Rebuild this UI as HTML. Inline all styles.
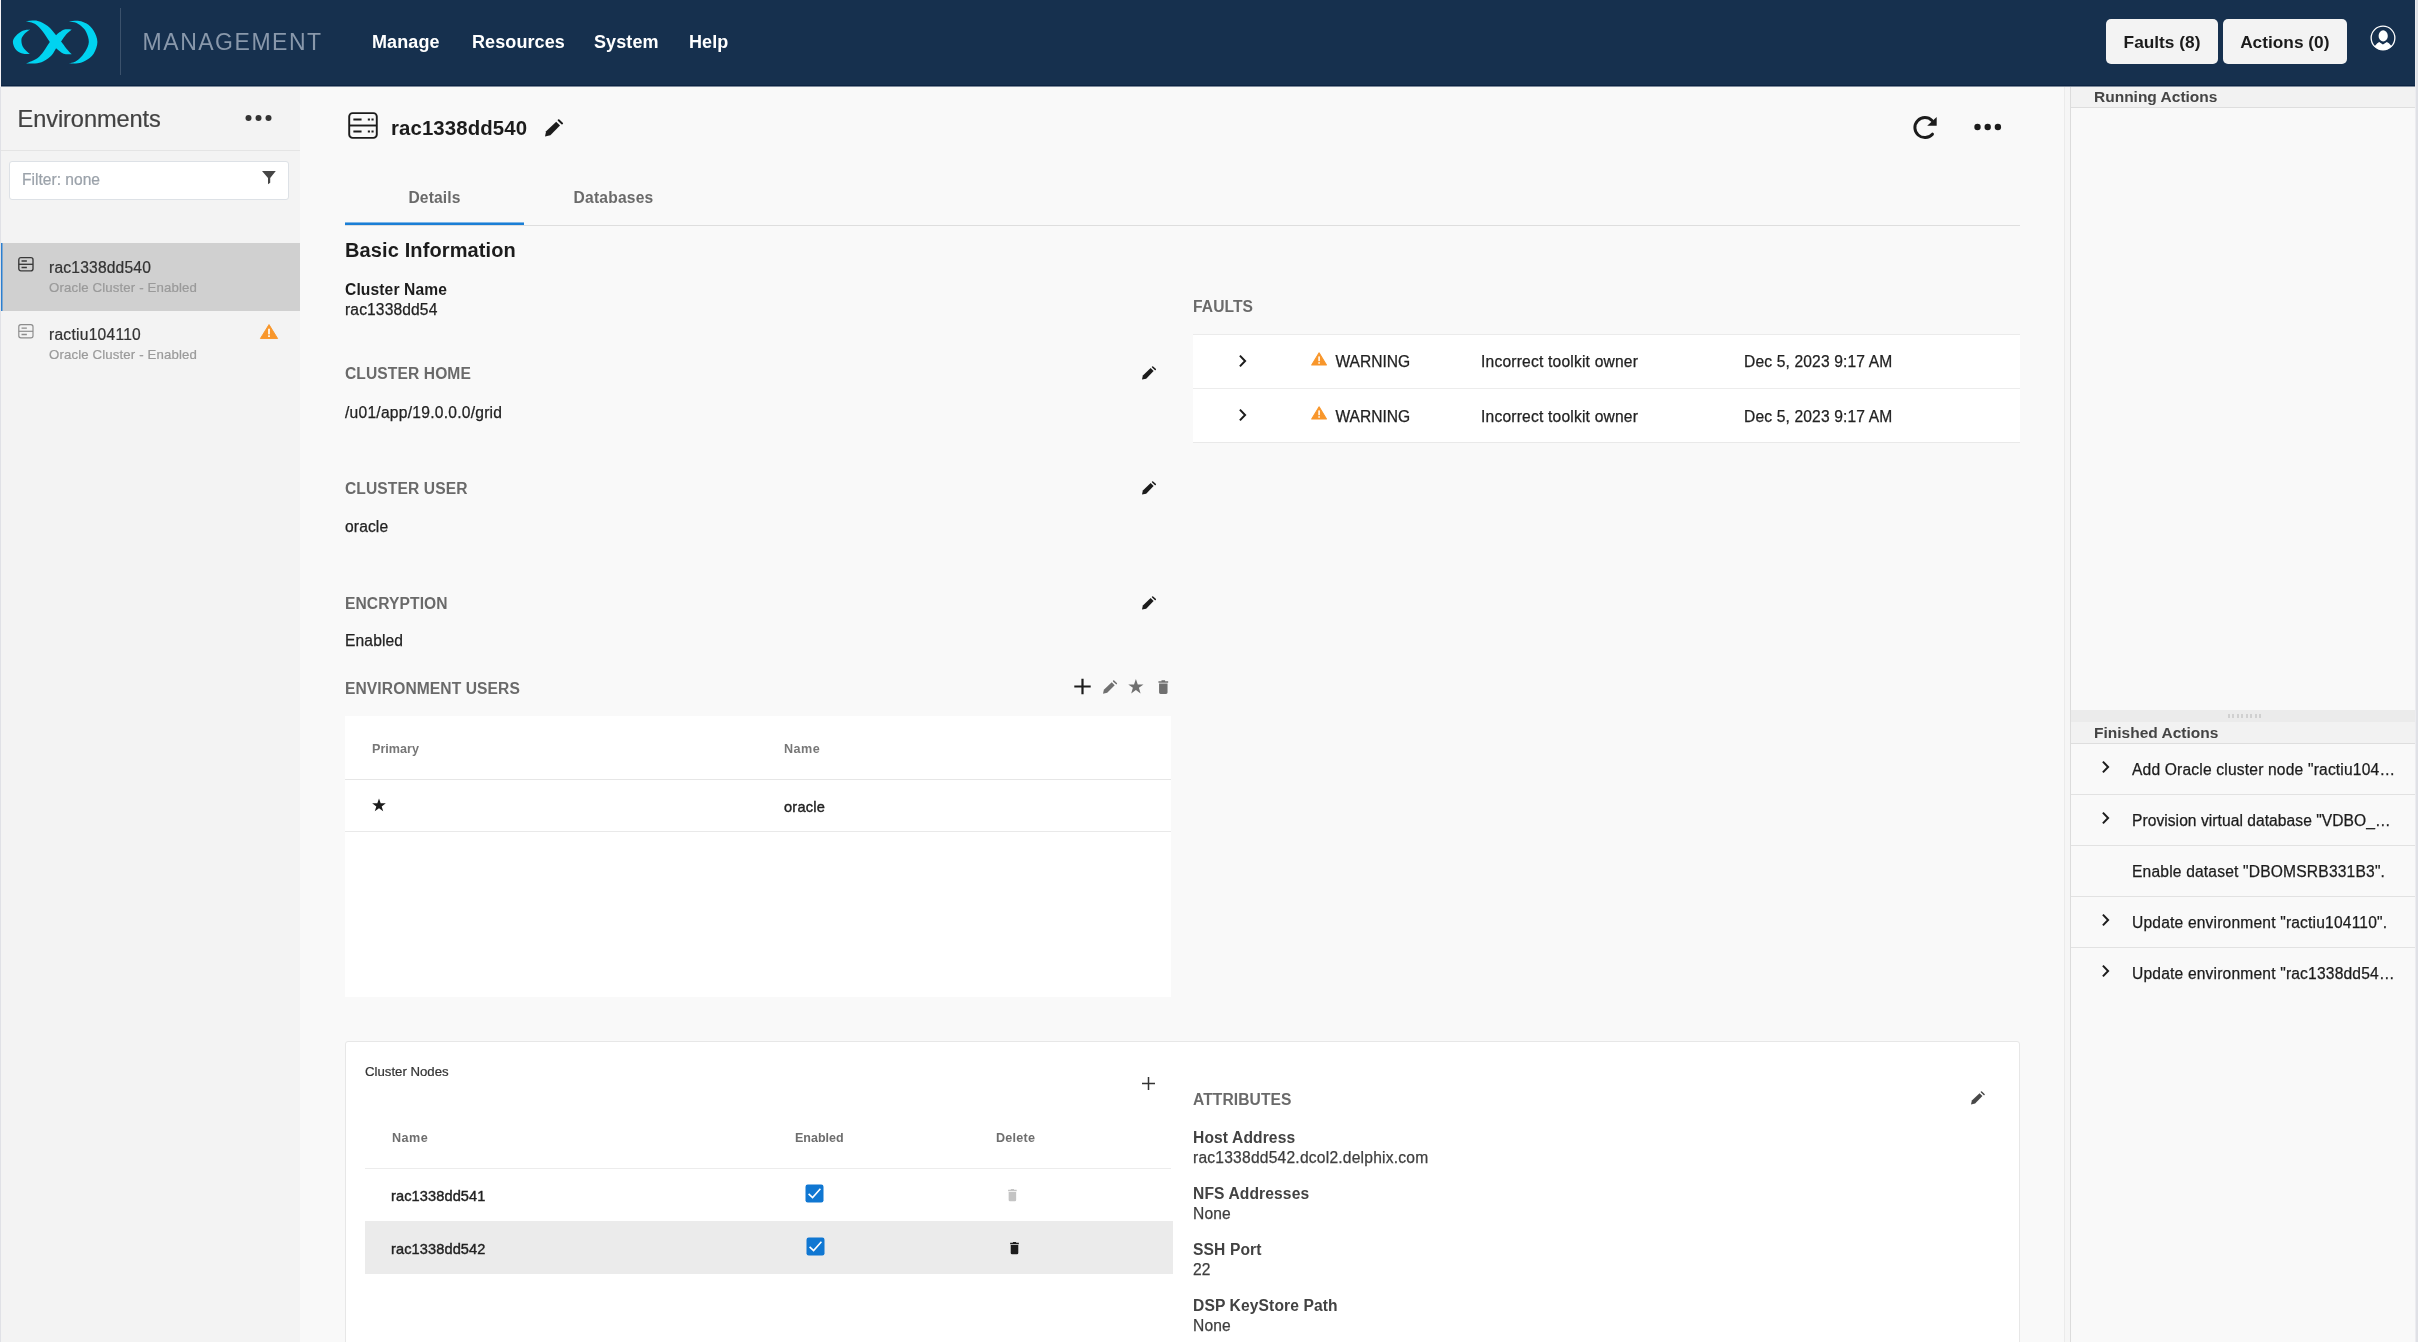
<!DOCTYPE html>
<html lang="en">
<head>
<meta charset="utf-8">
<title>Management - Environments</title>
<style>
*{box-sizing:border-box;margin:0;padding:0}
html,body{width:2418px;height:1342px;overflow:hidden;background:#e0e1e6}
body{font-family:"Liberation Sans",sans-serif;color:#1f1f1f;position:relative}
.abs,.t{position:absolute}
.t{white-space:nowrap;line-height:20px;-webkit-text-stroke:0.22px currentColor}
.b,.lbl,.hd,.nav,#mgmt{font-weight:bold;-webkit-text-stroke:0 transparent}
#mgmt{font-weight:normal}
#app{position:absolute;left:1px;top:0;width:2414px;height:1342px;background:#fafafa;overflow:hidden;will-change:transform}
/* header */
#hdr{position:absolute;left:0;top:0;width:2414px;height:87px;background:#16304e;border-bottom:1px solid #7d8a9b;box-shadow:inset 0 -1px 0 #0b2342;z-index:5}
#hdr .nav{color:#fff;font-weight:bold;font-size:18px;top:32px;letter-spacing:0.1px}
#hdr .btn{position:absolute;top:19px;height:45px;background:#f3f3f3;border-radius:5px;color:#1b1b1b;font-weight:bold;font-size:17.3px;line-height:47px;text-align:center}
/* sidebar */
#side{position:absolute;left:0;top:86px;width:299px;height:1256px;background:#f3f3f3}
/* main */
#main{position:absolute;left:299px;top:86px;width:1765px;height:1256px;background:#f9f9f9}
.lbl{font-weight:bold;font-size:15.6px;color:#6a6a6a;letter-spacing:0.1px}
.val{font-size:15.6px;color:#222;letter-spacing:0.13px;-webkit-text-stroke:0.25px currentColor}
.hd{font-weight:bold;font-size:15.6px;color:#424242;letter-spacing:0.12px}
/* right */
#split{position:absolute;left:2063px;top:86px;width:7px;height:1256px;background:#f6f6f6;border-left:1px solid #ebebeb;border-right:1px solid #dcdcdc}
#right{position:absolute;left:2070px;top:86px;width:344px;height:1256px;background:#f9f9f9}
.ph{position:absolute;left:0;width:344px;height:22px;background:#f2f2f2;border-bottom:1px solid #dedede}
.ph span{position:absolute;left:23px;top:0;line-height:22px;font-weight:bold;font-size:15.5px;color:#444}
.ar{position:absolute;left:0;width:344px;height:51px;border-bottom:1px solid #e2e2e2}
.ar .t{left:61px;top:16px;font-size:15.6px;color:#1c1c1c;letter-spacing:0.18px;-webkit-text-stroke:0.25px currentColor}
svg{position:absolute;overflow:visible}
</style>
</head>
<body>
<div class="abs" style="left:0;top:0;width:1px;height:87px;background:#f4f2f5"></div>
<div class="abs" style="left:2415px;top:0;width:1px;height:1342px;background:#ececf0"></div>
<div id="app">
<svg width="0" height="0" style="position:absolute;left:0;top:0"><defs>
<g id="pen"><path d="M0 17.4L1.1 12.3L11.2 2.7L15 6.5L5.4 16.3Z" fill="currentColor"/><path d="M13.7 1.2L17.1 4.4" stroke="currentColor" stroke-width="2" stroke-linecap="round" fill="none"/></g>
<path id="star" d="M7.5 0L9.3 5.2H14.8L10.4 8.5L12 13.8L7.5 10.6L3 13.8L4.6 8.5L0.2 5.2H5.7Z"/>
<path id="trash" d="M3.3 0H6.7V0.9H9.6V2.3H0.4V0.9H3.3ZM1 3.2H9V11.6Q9 13 7.6 13H2.4Q1 13 1 11.6Z"/>
<path id="chev" d="M1.9 1.6L7.1 7L1.9 12.4" fill="none" stroke="#1c1c1c" stroke-width="2"/>
<g id="warn"><path d="M9.5 1L18.2 15.2H0.8Z" fill="#f8962b" stroke="#f8962b" stroke-width="1.2" stroke-linejoin="round"/><rect x="8.6" y="5.2" width="1.8" height="5.6" fill="#fff"/><rect x="8.6" y="12" width="1.8" height="1.8" fill="#fff"/></g>
<g id="chk"><rect x="0.5" y="0.5" width="18" height="18" rx="2.2" fill="#1077d2"/><path d="M3.6 9.8L7.6 13.6L15.4 4.8" fill="none" stroke="#fff" stroke-width="1.6"/></g>
</defs></svg>

<!-- HEADER -->
<div id="hdr">
  <svg id="logo" style="left:5px;top:14px" width="100" height="56" viewBox="0 0 2396 1342"><g fill="#00d3f1">
    <path d="M570 370C542 375 455 375 400 400C345 425 279 477 240 520C201 563 168 608 165 660C162 712 186 783 220 830C254 877 312 918 370 940C428 962 532 957 565 960L565 955C549 941 498 899 470 870C442 841 417 815 400 780C383 745 372 697 370 660C368 623 368 595 385 560C402 525 439 481 470 450C501 419 553 388 570 375Z"/>
    <path d="M490 175C535 173 675 146 760 165C845 184 927 232 1000 290C1073 348 1147 448 1200 510C1253 572 1278 607 1320 660C1362 713 1408 780 1450 830C1492 880 1550 938 1570 960L1570 965C1538 962 1442 974 1380 950C1318 926 1255 867 1200 820C1145 773 1103 737 1050 670C997 603 938 492 880 420C822 348 765 280 700 240C635 200 525 190 490 180Z"/>
    <path d="M1570 370C1542 370 1448 358 1400 370C1352 382 1313 417 1280 440C1247 463 1238 472 1200 510C1162 548 1100 605 1050 670C1000 735 950 835 900 900C850 965 818 1013 750 1060C682 1107 533 1160 490 1180L490 1185C525 1185 632 1194 700 1185C768 1176 833 1164 900 1130C967 1096 1050 1032 1100 980C1150 928 1163 873 1200 820C1237 767 1278 717 1320 660C1362 603 1408 528 1450 480C1492 432 1550 392 1570 375Z"/>
    <path d="M1520 175C1558 173 1682 156 1750 165C1818 174 1872 191 1930 230C1988 269 2057 327 2100 400C2143 473 2190 578 2190 670C2190 762 2148 875 2100 950C2052 1025 1963 1082 1900 1120C1837 1158 1783 1169 1720 1180C1657 1191 1553 1184 1520 1185L1520 1182C1540 1177 1602 1167 1640 1150C1678 1133 1707 1122 1750 1080C1793 1038 1861 968 1900 900C1939 832 1982 748 1985 670C1988 592 1951 493 1920 430C1889 367 1840 327 1800 290C1760 253 1727 229 1680 210C1633 191 1547 183 1520 178Z"/>
  </g></svg>
  <svg id="user" style="left:2369.1px;top:24.8px" width="26" height="26" viewBox="0 0 26 26"><defs><clipPath id="uc"><circle cx="13" cy="13" r="12"/></clipPath></defs><circle cx="13" cy="13" r="11.85" fill="none" stroke="#fff" stroke-width="1.3"/><g clip-path="url(#uc)" fill="#fff"><ellipse cx="13.2" cy="10.9" rx="4.6" ry="5.6"/><path d="M2 23L5 20.7Q7.5 17.6 9.2 17.1Q11 18.5 12.9 19.6Q15 18.5 16.8 17.1Q19 17.8 21 20.4L24 23V26H2Z"/></g></svg>
  <div class="abs" style="left:119px;top:8px;width:1px;height:67px;background:#3b516b"></div>
  <div class="t" id="mgmt" style="left:141.6px;top:28px;font-size:23px;line-height:28px;letter-spacing:1.52px;color:#8998ab">MANAGEMENT</div>
  <div class="t nav" style="left:371px">Manage</div>
  <div class="t nav" style="left:471px">Resources</div>
  <div class="t nav" style="left:593px">System</div>
  <div class="t nav" style="left:688px">Help</div>
  <div class="btn" style="left:2105px;width:112px"><span class="bt">Faults (8)</span></div>
  <div class="btn" style="left:2222px;width:123.6px"><span class="bt">Actions (0)</span></div>
</div>

<!-- SIDEBAR -->
<div id="side">
  <div class="t" style="left:16.5px;top:17px;font-size:23.6px;line-height:32px;color:#424242;letter-spacing:-0.08px">Environments</div>
  <svg style="left:243.6px;top:27.6px" width="28" height="8" viewBox="0 0 28 8"><circle cx="3.5" cy="4" r="3" fill="#333"/><circle cx="13.5" cy="4" r="3" fill="#333"/><circle cx="23.5" cy="4" r="3" fill="#333"/></svg>
  <div class="abs" style="left:0;top:64px;width:299px;height:1px;background:#e4e4e4"></div>
  <div class="abs" style="left:8px;top:75px;width:280px;height:38.6px;background:#fff;border:1px solid #dde1e6;border-radius:3px"></div>
  <div class="t" style="left:21px;top:84px;font-size:15.6px;color:#9ba2aa">Filter: none</div>
  <svg style="left:260.9px;top:84.9px" width="13.8" height="13.2" viewBox="0 0 13.8 13.2"><path d="M0 0H13.8L8.2 7V11.7L6 13.2V7Z" fill="#464646"/></svg>
  <!-- item 1 selected -->
  <div class="abs" style="left:0;top:157px;width:299px;height:68px;background:linear-gradient(90deg,#2a7fd0 0 1px,#7fa9d2 1px 2px,#d0d0d0 2px)"></div>
  <svg style="left:16.8px;top:170.5px" width="15.8" height="14.6" viewBox="0 0 16 15" fill="none" stroke="#3a3a3a" stroke-width="1.4"><rect x="0.7" y="0.7" width="14.6" height="13.6" rx="2.2"/><path d="M0.7 7.5H15.3"/><path d="M3.5 4.2H9M3.5 10.8H9" stroke-width="1.6"/></svg>
  <div class="t" style="left:48px;top:172px;font-size:15.6px;letter-spacing:0.2px;color:#333">rac1338dd540</div>
  <div class="t" style="left:48px;top:192px;font-size:13.2px;letter-spacing:0.15px;color:#9a9a9a">Oracle Cluster - Enabled</div>
  <!-- item 2 -->
  <svg style="left:16.8px;top:237.8px" width="15.8" height="14.6" viewBox="0 0 16 15" fill="none" stroke="#8c8c8c" stroke-width="1.2"><rect x="0.7" y="0.7" width="14.6" height="13.6" rx="2.2"/><path d="M0.7 7.5H15.3"/><path d="M3.5 4.2H9M3.5 10.8H9" stroke-width="1.4"/></svg>
  <div class="t" style="left:48px;top:239px;font-size:15.6px;letter-spacing:0.25px;color:#333">ractiu104110</div>
  <div class="t" style="left:48px;top:259px;font-size:13.2px;letter-spacing:0.15px;color:#9a9a9a">Oracle Cluster - Enabled</div>
  <svg style="left:258.6px;top:237.7px" width="18" height="15.1" viewBox="0 0 19 16" preserveAspectRatio="none"><path d="M9.5 0.6L18.6 15.4H0.4Z" fill="#f8962b" stroke="#f8962b" stroke-width="1" stroke-linejoin="round"/><rect x="8.6" y="5" width="1.8" height="6" fill="#fff"/><rect x="8.6" y="12" width="1.8" height="1.8" fill="#fff"/></svg>
</div>

<!-- MAIN -->
<div id="main">
  <!-- title row (coords relative to main: x-300, y-86) -->
  <svg style="left:48px;top:26px" width="30" height="27" viewBox="0 0 31 28" fill="none" stroke="#1c1c1c" stroke-width="2"><rect x="1.2" y="1.2" width="28.6" height="25.6" rx="3.5"/><path d="M1.2 14H29.8"/><path d="M5.5 7.8H14M5.5 20.2H14" stroke-width="2.2"/><path d="M20.5 7.8H22.7M24.3 7.8H26.5M20.5 20.2H22.7M24.3 20.2H26.5" stroke-width="2.2"/></svg>
  <div class="t b" style="left:91px;top:29px;font-size:20.4px;line-height:26px;letter-spacing:0.1px;color:#1c1c1c">rac1338dd540</div>
  <svg style="left:245.4px;top:33.4px;color:#1c1c1c" width="18.2" height="17.5" viewBox="0 0 18.2 17.5"><use href="#pen"/></svg>
  <svg style="left:1612px;top:29.4px" width="26" height="26" viewBox="0 0 26 26"><path d="M19.97 5.53A10 10 0 1 0 20.45 19.16" fill="none" stroke="#1c1c1c" stroke-width="3" stroke-linecap="round"/><path d="M24.7 2.1V10.7H15.2Z" fill="#1c1c1c"/></svg>
  <svg style="left:1674px;top:37px" width="28" height="8" viewBox="0 0 28 8"><circle cx="3.5" cy="4" r="3.2" fill="#1c1c1c"/><circle cx="13.7" cy="4" r="3.2" fill="#1c1c1c"/><circle cx="23.9" cy="4" r="3.2" fill="#1c1c1c"/></svg>
  <!-- tabs -->
  <div class="t b" style="left:45px;top:102px;width:179px;text-align:center;font-size:15.6px;letter-spacing:0.15px;color:#6a6a6a">Details</div>
  <div class="t b" style="left:224px;top:102px;width:179px;text-align:center;font-size:15.6px;letter-spacing:0.2px;color:#6a6a6a">Databases</div>
  <div class="abs" style="left:45px;top:139px;width:1675px;height:1px;background:#dedede"></div>
  <div class="abs" style="left:45px;top:136px;width:179px;height:3px;background:linear-gradient(#7fb6e6 0 1px,#1b7fd6 1px)"></div>
  <!-- basic info -->
  <div class="t b" style="left:45px;top:151px;font-size:20px;line-height:26px;letter-spacing:0.12px;color:#1c1c1c">Basic Information</div>
  <div class="t b" style="left:45px;top:194px;font-size:15.6px;letter-spacing:0.12px;color:#1c1c1c">Cluster Name</div>
  <div class="t val" style="left:45px;top:214px">rac1338dd54</div>
  <div class="t lbl" style="left:45px;top:278px">CLUSTER HOME</div>
  <div class="t val" style="left:45px;top:317px;letter-spacing:0.25px">/u01/app/19.0.0.0/grid</div>
  <div class="t lbl" style="left:45px;top:393px">CLUSTER USER</div>
  <div class="t val" style="left:45px;top:431px">oracle</div>
  <div class="t lbl" style="left:45px;top:508px">ENCRYPTION</div>
  <div class="t val" style="left:45px;top:545px">Enabled</div>
  <div class="t lbl" style="left:45px;top:593px">ENVIRONMENT USERS</div>
  <!-- edit pencils -->
  <svg style="left:842.2px;top:280.3px;color:#1c1c1c" width="14.1" height="13.6" viewBox="0 0 18.2 17.5"><use href="#pen"/></svg>
  <svg style="left:842.2px;top:395.1px;color:#1c1c1c" width="14.1" height="13.6" viewBox="0 0 18.2 17.5"><use href="#pen"/></svg>
  <svg style="left:842.2px;top:510px;color:#1c1c1c" width="14.1" height="13.6" viewBox="0 0 18.2 17.5"><use href="#pen"/></svg>
  <!-- env users toolbar -->
  <svg style="left:773.7px;top:591.8px" width="17" height="17" viewBox="0 0 17 17"><path d="M8.5 0.7V16.3M0.3 8.5H16.7" stroke="#1c1c1c" stroke-width="2.2" fill="none"/></svg>
  <svg style="left:803.1px;top:593.7px;color:#707070" width="14.2" height="13.9" viewBox="0 0 18.2 17.5"><use href="#pen"/></svg>
  <svg style="left:827.8px;top:593.2px" width="15.8" height="14.6" viewBox="0 0 15 14"><use href="#star" fill="#707070"/></svg>
  <svg style="left:858.3px;top:593.6px" width="10.6" height="14.2" viewBox="0 0 10 13"><use href="#trash" fill="#707070"/></svg>
  <!-- env users table -->
  <div class="abs" style="left:45px;top:630px;width:826px;height:281px;background:#fff"></div>
  <div class="abs" style="left:45px;top:693px;width:826px;height:1px;background:#e6e6e6"></div>
  <div class="abs" style="left:45px;top:745px;width:826px;height:1px;background:#e9e9e9"></div>
  <div class="t b" style="left:72px;top:653px;font-size:12.6px;color:#777">Primary</div>
  <div class="t b" style="left:484px;top:653px;font-size:12.6px;letter-spacing:0.45px;color:#777">Name</div>
  <svg style="left:72px;top:712px" width="14" height="14" viewBox="0 0 15 14"><use href="#star" fill="#1c1c1c"/></svg>
  <div class="t" style="left:484px;top:711px;font-size:14.6px;color:#222;letter-spacing:0.2px;-webkit-text-stroke:0.4px currentColor">oracle</div>

  <!-- FAULTS -->
  <div class="t lbl" style="left:893px;top:211px">FAULTS</div>
  <div class="abs" style="left:893px;top:248px;width:827px;height:109px;background:#fff;border-top:1px solid #ebebeb;border-bottom:1px solid #e9e9e9"></div>
  <div class="abs" style="left:893px;top:302px;width:827px;height:1px;background:#ececec"></div>
  <svg style="left:938px;top:268px" width="10" height="14" viewBox="0 0 10 14"><use href="#chev"/></svg>
  <svg style="left:938px;top:322px" width="10" height="14" viewBox="0 0 10 14"><use href="#chev"/></svg>
  <svg style="left:1010.7px;top:265.7px" width="16.2" height="13.6" viewBox="0 0 19 16" preserveAspectRatio="none"><use href="#warn"/></svg>
  <svg style="left:1010.7px;top:320.3px" width="16.2" height="13.6" viewBox="0 0 19 16" preserveAspectRatio="none"><use href="#warn"/></svg>
  <div class="t val" style="left:1035.5px;top:266px;font-size:15.6px;letter-spacing:-0.03px">WARNING</div>
  <div class="t val" style="left:1181px;top:266px;font-size:15.6px;letter-spacing:0.2px">Incorrect toolkit owner</div>
  <div class="t val" style="left:1444px;top:266px;font-size:15.6px;letter-spacing:0.15px">Dec 5, 2023 9:17 AM</div>
  <div class="t val" style="left:1035.5px;top:321px;font-size:15.6px;letter-spacing:-0.03px">WARNING</div>
  <div class="t val" style="left:1181px;top:321px;font-size:15.6px;letter-spacing:0.2px">Incorrect toolkit owner</div>
  <div class="t val" style="left:1444px;top:321px;font-size:15.6px;letter-spacing:0.15px">Dec 5, 2023 9:17 AM</div>

  <!-- CLUSTER NODES CARD -->
  <div class="abs" style="left:45px;top:955px;width:1675px;height:320px;background:#fff;border:1px solid #e7e7e7;border-radius:3px"></div>
  <div class="t" style="left:65px;top:976px;font-size:13.2px;color:#333">Cluster Nodes</div>
  <svg style="left:842.3px;top:990.5px" width="13" height="13" viewBox="0 0 13 13"><path d="M6.5 0V13M0 6.5H13" stroke="#333" stroke-width="1.5" fill="none"/></svg>
  <div class="t b" style="left:92px;top:1042px;font-size:12.6px;letter-spacing:0.45px;color:#6e6e6e">Name</div>
  <div class="t b" style="left:495px;top:1042px;font-size:12.5px;color:#6e6e6e">Enabled</div>
  <div class="t b" style="left:696px;top:1042px;font-size:12.6px;letter-spacing:0.25px;color:#6e6e6e">Delete</div>
  <div class="abs" style="left:65px;top:1082px;width:806px;height:1px;background:#ececec"></div>
  <div class="abs" style="left:65px;top:1135px;width:808px;height:53px;background:#ebebeb"></div>
  <div class="t" style="left:91px;top:1100px;font-size:14.6px;letter-spacing:0.1px;color:#222;-webkit-text-stroke:0.4px currentColor">rac1338dd541</div>
  <div class="t" style="left:91px;top:1153px;font-size:14.6px;letter-spacing:0.1px;color:#222;-webkit-text-stroke:0.4px currentColor">rac1338dd542</div>
  <svg style="left:505px;top:1098px" width="19" height="19" viewBox="0 0 19 19"><use href="#chk"/></svg>
  <svg style="left:506px;top:1151px" width="19" height="19" viewBox="0 0 19 19"><use href="#chk"/></svg>
  <svg style="left:707.2px;top:1102.9px" width="10.8" height="12.2" viewBox="0 0 10 13"><use href="#trash" fill="#c4c4c4"/></svg>
  <svg style="left:708.6px;top:1155.9px" width="11" height="12.3" viewBox="0 0 10 13"><use href="#trash" fill="#1c1c1c"/></svg>

  <!-- ATTRIBUTES -->
  <div class="t lbl" style="left:893px;top:1003.5px">ATTRIBUTES</div>
  <svg style="left:1670.5px;top:1005.4px;color:#484848" width="13.9" height="13.6" viewBox="0 0 18.2 17.5"><use href="#pen"/></svg>
  <div class="t hd" style="left:893px;top:1042px">Host Address</div>
  <div class="t val" style="left:893px;top:1062px;color:#3e3e3e;letter-spacing:0.22px">rac1338dd542.dcol2.delphix.com</div>
  <div class="t hd" style="left:893px;top:1098px">NFS Addresses</div>
  <div class="t val" style="left:893px;top:1118px;color:#3e3e3e">None</div>
  <div class="t hd" style="left:893px;top:1154px">SSH Port</div>
  <div class="t val" style="left:893px;top:1174px;color:#3e3e3e">22</div>
  <div class="t hd" style="left:893px;top:1210px">DSP KeyStore Path</div>
  <div class="t val" style="left:893px;top:1230px;color:#3e3e3e">None</div>
</div>

<!-- RIGHT -->
<div id="split"></div>
<div id="right">
  <div class="ph" style="top:0"><span>Running Actions</span></div>
  <div class="abs" style="left:0;top:624px;width:344px;height:12px;background:#ebebeb"></div>
  <div class="abs" id="grip" style="left:157px;top:628px;width:34px;height:4px;background:repeating-linear-gradient(90deg,#d0d0d0 0 2px,transparent 2px 4.5px)"></div>
  <div class="ph" style="top:636px"><span>Finished Actions</span></div>
  <div class="ar" style="top:658px"><svg style="left:30px;top:16px" width="10" height="14" viewBox="0 0 10 14"><use href="#chev"/></svg><div class="t">Add Oracle cluster node "ractiu104…</div></div>
  <div class="ar" style="top:709px"><svg style="left:30px;top:16px" width="10" height="14" viewBox="0 0 10 14"><use href="#chev"/></svg><div class="t" style="letter-spacing:0.05px">Provision virtual database "VDBO_…</div></div>
  <div class="ar" style="top:760px"><div class="t">Enable dataset "DBOMSRB331B3".</div></div>
  <div class="ar" style="top:811px"><svg style="left:30px;top:16px" width="10" height="14" viewBox="0 0 10 14"><use href="#chev"/></svg><div class="t">Update environment "ractiu104110".</div></div>
  <div class="ar" style="top:862px;border-bottom:none"><svg style="left:30px;top:16px" width="10" height="14" viewBox="0 0 10 14"><use href="#chev"/></svg><div class="t">Update environment "rac1338dd54…</div></div>
</div>

</div>
</body>
</html>
